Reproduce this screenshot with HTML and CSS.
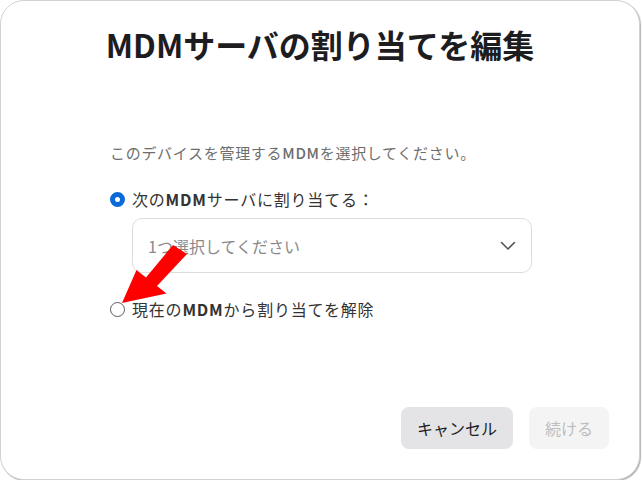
FILE: index.html
```html
<!DOCTYPE html>
<html lang="ja">
<head>
<meta charset="utf-8">
<link rel="stylesheet" href="styles.css">
</head>
<body>
<div class="dialog">
  <h1 class="title">MDMサーバの割り当てを編集</h1>
  <div class="content">
    <p class="desc">このデバイスを管理する<span class="latin">MDM</span>を選択してください。</p>
    <div class="radio-row">
      <span class="radio radio-on"></span>
      <span class="label">次の<b>MDM</b>サーバに割り当てる：</span>
    </div>
    <div class="select">
      <span class="placeholder">1つ選択してください</span>
      <svg class="chevron" width="16" height="10" viewBox="0 0 16 10"><path d="M1.5 1.5 L8 8 L14.5 1.5" fill="none" stroke="#555" stroke-width="1.6" stroke-linecap="round" stroke-linejoin="round"/></svg>
    </div>
    <div class="radio-row row2">
      <span class="radio"></span>
      <span class="label">現在の<b>MDM</b>から割り当てを解除</span>
    </div>
  </div>
  <div class="actions">
    <button class="btn btn-cancel">キャンセル</button>
    <button class="btn btn-continue">続ける</button>
  </div>
  <svg class="arrow" width="642" height="482" viewBox="0 0 642 482">
    <polygon points="122,303 136.5,270 146,277.5 173,245 187,254 157,286 166.5,293.5" fill="#ff0000"/>
  </svg>
</div>
</body>
</html>
```

FILE: styles.css
```css
html, body {
  margin: 0;
  padding: 0;
  background: #ffffff;
}
body {
  font-family: "Noto Sans CJK JP", "Noto Sans", sans-serif;
  color: #222;
}
.dialog {
  position: relative;
  width: 640px;
  height: 480px;
  box-sizing: border-box;
  border: 1px solid #d2d2d2;
  border-radius: 24px;
  box-shadow: 1px 1px 1px rgba(0,0,0,0.3);
  background: #fff;
  display: flex;
  flex-direction: column;
}
.title {
  margin: 0;
  padding-top: 21px;
  font-size: 32px;
  line-height: 45px;
  font-weight: 700;
  text-align: center;
  color: #1d1d1f;
}
.content {
  padding-left: 109px;
  margin-top: 75px;
  flex: 1;
}
.desc {
  margin: 0;
  font-size: 15px;
  line-height: 22px;
  letter-spacing: 0.7px;
  color: #6e6e6e;
}
.latin {
  font-weight: 500;
}
.radio-row {
  display: flex;
  align-items: center;
  gap: 7px;
  margin-top: 22px;
  height: 26px;
}
.row2 {
  margin-top: 23px;
}
.label {
  font-size: 16px;
  letter-spacing: 0.8px;
  color: #333;
}
.label b {
  font-weight: 700;
}
.radio {
  width: 15px;
  height: 15px;
  box-sizing: border-box;
  border-radius: 50%;
  border: 1.5px solid #5a5a5a;
  background: #fff;
  flex: none;
}
.radio-on {
  border: 5px solid #0a6ad8;
  background: #fff;
}
.select {
  margin-top: 6px;
  margin-left: 22px;
  width: 400px;
  height: 55px;
  box-sizing: border-box;
  border: 1px solid #dcdcdc;
  border-radius: 10px;
  display: flex;
  align-items: center;
  justify-content: space-between;
  padding: 0 15px 0 15px;
}
.placeholder {
  font-size: 16px;
  color: #8a8a8a;
}
.actions {
  display: flex;
  justify-content: flex-end;
  gap: 16px;
  padding: 0 30px 30px 0;
}
.btn {
  font-family: inherit;
  font-size: 16px;
  height: 42px;
  border: none;
  border-radius: 8px;
  padding: 0 16px;
}
.btn-cancel {
  width: 112px;
  background: #e4e4e6;
  color: #1d1d1f;
}
.btn-continue {
  width: 80px;
  background: #f4f4f4;
  color: #bdbdbd;
}
.arrow {
  position: absolute;
  left: -1px;
  top: -1px;
  pointer-events: none;
}
```
